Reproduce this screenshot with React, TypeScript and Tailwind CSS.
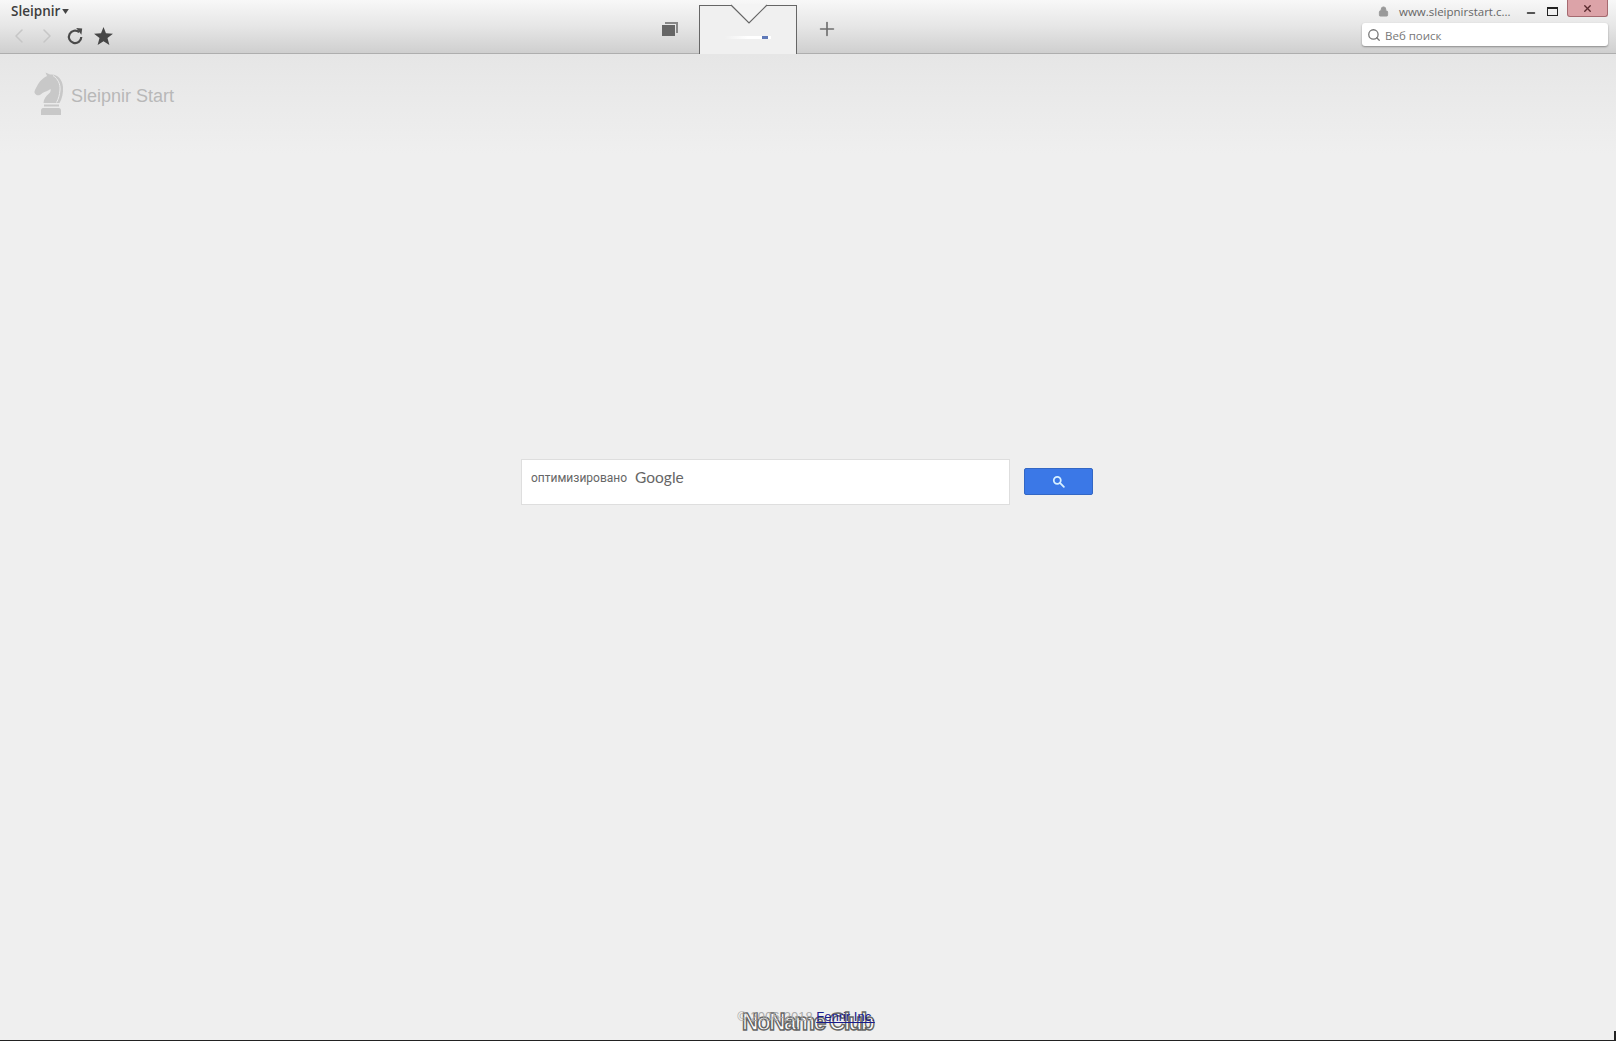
import { ChevronLeft, ChevronRight, Plus, Lock, Search, Minus, X } from "lucide-react"

const SearchGlyph = ({ className }: { className?: string }) => (
  <svg viewBox="0 0 16 16" className={className} fill="none" stroke="currentColor" strokeWidth="2.2">
    <circle cx="6.5" cy="6.5" r="4.3" />
    <path d="M9.8 9.8 14.6 14.6" strokeLinecap="round" />
  </svg>
)

const Knight = () => (
  <svg viewBox="0 0 30 43" className="w-[30px] h-[43px] -mt-[6px]" fill="#c8c8c8">
    <path d="M13 4 L11.5 0.5 L16 2.5 C23 1.5 28.5 7 29 15 C29.4 21 28 27 25.5 31 L9.5 31 C9.5 27 12 24 15 21.5 C16.5 20 17 18.5 16.5 17 C14 19 11 19.5 8.5 21 C6.5 23 4 24 2.2 22.8 C0.5 21.5 0 20 1 18 C3 14 5 9.5 8.5 7 C10 5.8 11.5 4.8 13 4 Z" />
    <path d="M19 3.5 C24 7 26.5 12 26 18 C25.6 23 24.5 27 22.5 30.5" fill="none" stroke="#ececec" strokeWidth="1" />
    <path d="M10 32.5 H25 V34.5 H10 Z" />
    <path d="M9 36 C8 36 7 37 7 38.5 V43 H27 V38.5 C27 37 26 36 25 36 Z" />
  </svg>
)

const App = () => {
  return (
    <div className="h-[1041px] w-[1616px] flex flex-col overflow-hidden bg-[#efefef] font-['Open_Sans',sans-serif] relative">
      <header className="h-[54px] shrink-0 flex border-b border-[#aeaeae] bg-gradient-to-b from-[#f8f8f8] via-[#e6e6e6] to-[#cfcfcf]">
        <div className="w-[662px] shrink-0 pl-[11px] pt-[3px]">
          <div className="flex items-center h-[17px] text-[13.5px] font-semibold text-[#3d3d3d]">
            Sleipnir
            <svg viewBox="0 0 8 6" className="w-[7px] h-[5px] ml-[2px]" fill="#444"><path d="M0 0 H8 L4 6 Z" /></svg>
          </div>
          <div className="flex items-center mt-[4px] -ml-[4px]">
            <ChevronLeft className="w-[24px] h-[24px] text-[#c6c6c6]" strokeWidth={1.5} />
            <ChevronRight className="w-[24px] h-[24px] ml-[4px] text-[#c6c6c6]" strokeWidth={1.5} />
            <svg viewBox="0 0 18 18" className="w-[18px] h-[18px] ml-[7px]" fill="none">
              <path d="M13.2 5.2 A6.2 6.2 0 1 0 15.3 10" stroke="#4a4a4a" strokeWidth="2.2" />
              <path d="M10.2 1 L16.2 1.6 L15.4 7.8 Z" fill="#4a4a4a" />
            </svg>
            <svg viewBox="0 0 20 19" className="w-[19px] h-[18px] ml-[10px]" fill="#464646">
              <path d="M10 0 L12.6 6.6 L20 7.1 L14.2 11.7 L16.2 19 L10 15 L3.8 19 L5.8 11.7 L0 7.1 L7.4 6.6 Z" />
            </svg>
          </div>
        </div>
        <div className="w-[37px] shrink-0 pt-[22px]">
          <svg viewBox="0 0 16 14" className="w-[16px] h-[14px]" fill="#666">
            <path d="M3 0 H16 V11 H14 V2 H3 Z" fill="#888" />
            <path d="M0 3 H13 V14 H0 Z" />
          </svg>
        </div>
        <div className="relative w-[98px] shrink-0 mt-[5px] h-[49px] border-x border-t border-[#666] bg-[#f0f0f0] flex items-center justify-center">
          <svg viewBox="0 0 38 20" className="absolute -top-[2px] left-[30px] w-[38px] h-[20px]">
            <path d="M0 0 L19 19 L38 0 Z" fill="#f4f4f4" />
            <path d="M1 1 L19 19 L37 1" fill="none" stroke="#666" strokeWidth="1.2" />
          </svg>
          <div className="mt-[14px] flex items-center w-[46px] h-[3px] bg-gradient-to-r from-[#f0f0f0] via-white to-white">
            <div className="ml-auto mr-[3px] w-[6px] h-[3px] bg-[#5f79b8]" />
          </div>
        </div>
        <div className="w-[17px] shrink-0" />
        <Plus className="w-[22px] h-[22px] mt-[18px] ml-[2px] text-[#6e6e6e] shrink-0" strokeWidth={1.8} />
        <div className="ml-auto w-[254px] shrink-0 pr-[8px]">
          <div className="h-[23px] flex items-start">
            <div className="flex items-center h-[17px] mt-[3px]">
              <Lock className="w-[11px] h-[11px] ml-[16px] text-[#999]" fill="#999" />
              <span className="ml-[10px] text-[11.5px] text-[#666] whitespace-nowrap">www.sleipnirstart.c...</span>
              <Minus className="w-[12px] h-[12px] ml-[14px] mt-[3px] text-[#222]" strokeWidth={3} />
              <div className="w-[11px] h-[9px] ml-[10px] border border-[#222] border-t-2" />
            </div>
            <div className="ml-auto w-[41px] h-[17px] rounded-b-[3px] bg-[#dca3a8] border border-[#a56a70] border-t-0 flex items-center justify-center">
              <X className="w-[11px] h-[11px] text-[#5a2a2e]" strokeWidth={3} />
            </div>
          </div>
          <div className="h-[23px] rounded-[3px] bg-white shadow-[0_1px_2px_rgba(0,0,0,0.35)] flex items-center pl-[5px]">
            <Search className="w-[14px] h-[14px] text-[#777]" strokeWidth={2.2} />
            <span className="ml-[4px] mt-[3px] text-[11.5px] text-[#777]">Веб поиск</span>
          </div>
        </div>
      </header>

      <main className="flex-1 flex flex-col bg-gradient-to-b from-[#e6e6e6] to-[#efefef] bg-[length:100%_100px] bg-no-repeat">
        <div className="flex items-center pl-[34px] pt-[20px] h-[64px]">
          <Knight />
          <span className="ml-[7px] mt-[0px] text-[18px] text-[#b8b8b8] font-['Liberation_Sans',sans-serif]">Sleipnir Start</span>
        </div>

        <div className="mt-[341px] flex justify-center pr-[2px]">
          <div className="w-[489px] h-[46px] bg-white border border-[#dedede] pl-[9px] flex items-start pt-[8px] font-['Roboto',sans-serif] text-[#666]">
            <span className="text-[12px] leading-[20px]">оптимизировано</span>
            <span className="ml-[8px] -mt-[1px] text-[15.5px] leading-[20px] font-['Lato',sans-serif]">Google</span>
          </div>
          <button className="ml-[14px] mt-[9px] w-[69px] h-[27px] rounded-[2px] bg-[#3b78e7] border border-[#3367c4] flex items-center justify-center">
            <SearchGlyph className="w-[13px] h-[13px] text-[#d8f0ff]" />
          </button>
        </div>

        <footer className="mt-auto h-[39px] relative flex justify-center border-b border-[#222] pr-[4px] font-['Liberation_Sans',sans-serif]">
          <div className="absolute left-[742px] top-[7px] text-[23px] leading-[26px] font-bold tracking-[-1.8px] text-white [-webkit-text-stroke:1.4px_#666] whitespace-nowrap">
            NoName Club
          </div>
          <div className="relative text-[13px] pt-[5px] text-[#aaa] whitespace-nowrap">
            © 2006-2018 <span className="text-[#1a1a8c] underline">Fenrir Inc.</span>
          </div>
        </footer>
      </main>
      <div className="absolute right-0 bottom-0 w-[2px] h-[10px] bg-[#222]" />
    </div>
  )
}

export default App
